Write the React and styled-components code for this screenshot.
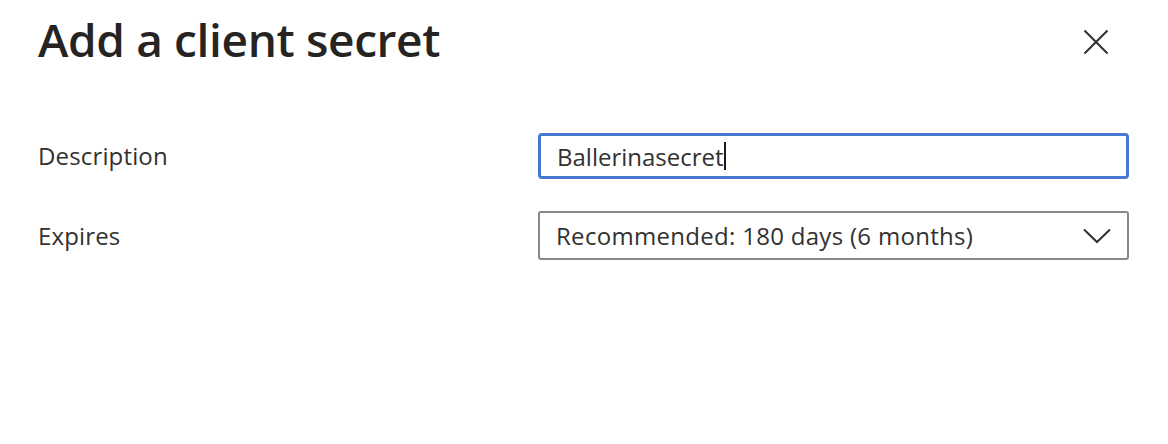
import React from "react";
import styled, { createGlobalStyle } from "styled-components";

const Global = createGlobalStyle`
  html, body { margin: 0; padding: 0; background: #ffffff; }
  body { font-family: "Open Sans", "Noto Sans", sans-serif; color: #323130; }
`;

const Panel = styled.div`
  width: 1168px;
  height: 444px;
  box-sizing: border-box;
  padding: 10px 39px 0 38px;
`;

const Header = styled.div`
  display: flex;
  justify-content: space-between;
  align-items: flex-start;
`;

const Title = styled.h1`
  margin: 0;
  font-size: 46px;
  font-weight: 600;
  line-height: 58px;
  color: #252423;
  letter-spacing: -0.36px;
`;

const CloseButton = styled.button`
  border: none;
  background: transparent;
  padding: 0;
  margin: 19px 20px 0 0;
  width: 26px;
  height: 26px;
  display: flex;
  align-items: center;
  justify-content: center;
  cursor: pointer;
`;

const Form = styled.div`
  display: grid;
  grid-template-columns: 500px 591px;
  row-gap: 32px;
  margin-top: 65px;
  align-items: center;
`;

const Label = styled.label`
  font-size: 24px;
  color: #323130;
  line-height: 32px;
  letter-spacing: 0.15px;
`;

const TextField = styled.div`
  height: 46px;
  box-sizing: border-box;
  border: 3px solid #4a78d0;
  border-radius: 4px;
  display: flex;
  align-items: center;
  padding-left: 16px;
  font-size: 24px;
  color: #323130;
`;

const Caret = styled.span`
  display: inline-block;
  width: 2px;
  height: 28px;
  background: #1b1a19;
`;

const Dropdown = styled.div`
  height: 49px;
  box-sizing: border-box;
  border: 2px solid #8a8886;
  border-radius: 3px;
  display: flex;
  align-items: center;
  justify-content: space-between;
  padding: 0 16px 0 16px;
  font-size: 24px;
  letter-spacing: 0.3px;
  color: #323130;
`;

export default function App() {
  return (
    <>
      <Global />
      <Panel>
        <Header>
          <Title>Add a client secret</Title>
          <CloseButton aria-label="Close">
            <svg width="26" height="26" viewBox="0 0 26 26">
              <path d="M1.5 1.5 L24.5 24.5 M24.5 1.5 L1.5 24.5" stroke="#323130" strokeWidth="2" fill="none" />
            </svg>
          </CloseButton>
        </Header>
        <Form>
          <Label>Description</Label>
          <TextField>
            Ballerinasecret<Caret />
          </TextField>
          <Label>Expires</Label>
          <Dropdown>
            <span>Recommended: 180 days (6 months)</span>
            <svg width="28" height="16" viewBox="0 0 28 16">
              <path d="M1 1.5 L14 14 L27 1.5" stroke="#323130" strokeWidth="2" fill="none" />
            </svg>
          </Dropdown>
        </Form>
      </Panel>
    </>
  );
}
